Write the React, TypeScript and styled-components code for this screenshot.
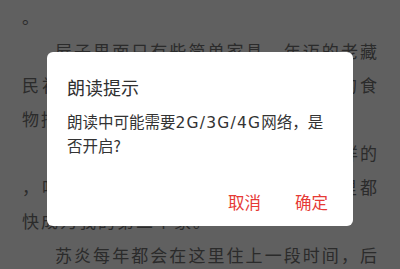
import React from "react"
import styled, { createGlobalStyle } from "styled-components"

const GlobalStyle = createGlobalStyle`
  html, body {
    margin: 0;
    padding: 0;
    background: #f0f0f0;
    overflow: hidden;
  }
  body {
    font-family: "Noto Sans CJK SC", "Noto Sans", sans-serif;
  }
`

const paragraphs: { text: string; continued?: boolean }[] = [
    { text: "。", continued: true },
    { text: "屋子里面只有些简单家具，年迈的老藏民初见我们，便热情地拿出家中珍藏的食物招待我们。" },
    { text: "刚来那时，这里还不是现在这个模样的，吃住久了才知道，这里的一切在心里都快成为我的第二个家。" },
    { text: "苏炎每年都会在这里住上一段时间，后来干脆把这里当成了自己的家。" }
]

const App: React.FC = () => {
    return (
        <>
            <GlobalStyle />
            <ReaderPage>
                {paragraphs.map((p, i) => (
                    <Paragraph key={i} $continued={p.continued}>
                        {p.text}
                    </Paragraph>
                ))}
            </ReaderPage>
            <Overlay>
                <Dialog>
                    <DialogTitle>朗读提示</DialogTitle>
                    <DialogMessage>
                        朗读中可能需要<Latin>2G/3G/4G</Latin>网络，是否开启?
                    </DialogMessage>
                    <ButtonRow>
                        <DialogButton>取消</DialogButton>
                        <DialogButton>确定</DialogButton>
                    </ButtonRow>
                </Dialog>
            </Overlay>
        </>
    )
}

export default App

const ReaderPage = styled.div`
 display: flex;
 flex-direction: column;
 padding: 0 21px 0 22px;
 height: 100vh;
 overflow: hidden;
 box-sizing: border-box;
`

const Paragraph = styled.p<{ $continued?: boolean }>`
 margin: 0;
 flex-shrink: 0;
 color: #6c6c6c;
 font-size: 17px;
 letter-spacing: 2px;
 line-height: 34px;
 text-align: justify;
 line-break: anywhere;
 text-indent: ${p => (p.$continued ? "0" : "33px")};
`

const Overlay = styled.div`
 position: fixed;
 inset: 0;
 background: rgba(0, 0, 0, 0.6);
 display: flex;
 justify-content: center;
 align-items: flex-start;
 padding-top: 52px;
`

const Dialog = styled.div`
 width: 306px;
 box-sizing: border-box;
 background: #ffffff;
 border-radius: 6px;
 padding: 22.5px 0 0 20px;
 display: flex;
 flex-direction: column;
`

const DialogTitle = styled.div`
 color: #303030;
 font-size: 18px;
 line-height: 24px;
 margin-bottom: 11px;
`

const DialogMessage = styled.div`
 color: #333333;
 font-size: 15.5px;
 line-height: 22px;
 padding-right: 20px;
`

const Latin = styled.span`
 font-family: "DejaVu Sans", "Noto Sans CJK SC", sans-serif;
 letter-spacing: 1.2px;
`

const ButtonRow = styled.div`
 display: flex;
 justify-content: flex-end;
 gap: 16px;
 margin-top: 22.5px;
 padding-right: 16px;
`

const DialogButton = styled.div`
 color: #e63a35;
 font-size: 16.5px;
 line-height: 24px;
 padding: 12px 9px;
 cursor: pointer;
`
